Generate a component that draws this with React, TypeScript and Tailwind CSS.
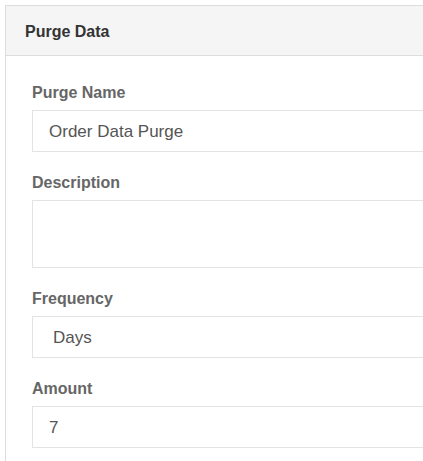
import React from "react";

const fields = [
  { label: "Purge Name", value: "Order Data Purge", kind: "input" },
  { label: "Description", value: "", kind: "textarea" },
  { label: "Frequency", value: "Days", kind: "select" },
  { label: "Amount", value: "7", kind: "input" },
];

const App: React.FC = () => {
  return (
    <div className="w-[423px] h-[461px] overflow-hidden bg-white font-['Liberation_Sans',Arial,sans-serif]">
      <div className="ml-[5px] mt-[5px] w-[480px] h-[500px] border-l border-t border-[#dddddd] bg-white">
        {/* header */}
        <div className="h-[50px] bg-[#f5f5f5] border-b border-[#dddddd] px-[19px] pt-[2px] flex items-center">
          <h1 className="text-[16px] font-bold text-[#333333] leading-[20px]">
            Purge Data
          </h1>
        </div>

        {/* form */}
        <div className="pt-[27px] pl-[26px]">
          {fields.map((f) => (
            <div key={f.label} className="mb-[21px]">
              <label className="block text-[16px] font-bold text-[#666666] leading-[20px] mb-[7px]">
                {f.label}
              </label>
              {f.kind === "textarea" ? (
                <div className="h-[68px] border border-[#e3e3e3] bg-white" />
              ) : (
                <div
                  className={`h-[42px] border border-[#e3e3e3] bg-white flex items-center pt-[2px] text-[17px] text-[#555555] ${
                    f.kind === "select" ? "pl-[20px]" : "pl-[16px]"
                  }`}
                >
                  {f.value}
                </div>
              )}
            </div>
          ))}
        </div>
      </div>
    </div>
  );
};

export default App;
